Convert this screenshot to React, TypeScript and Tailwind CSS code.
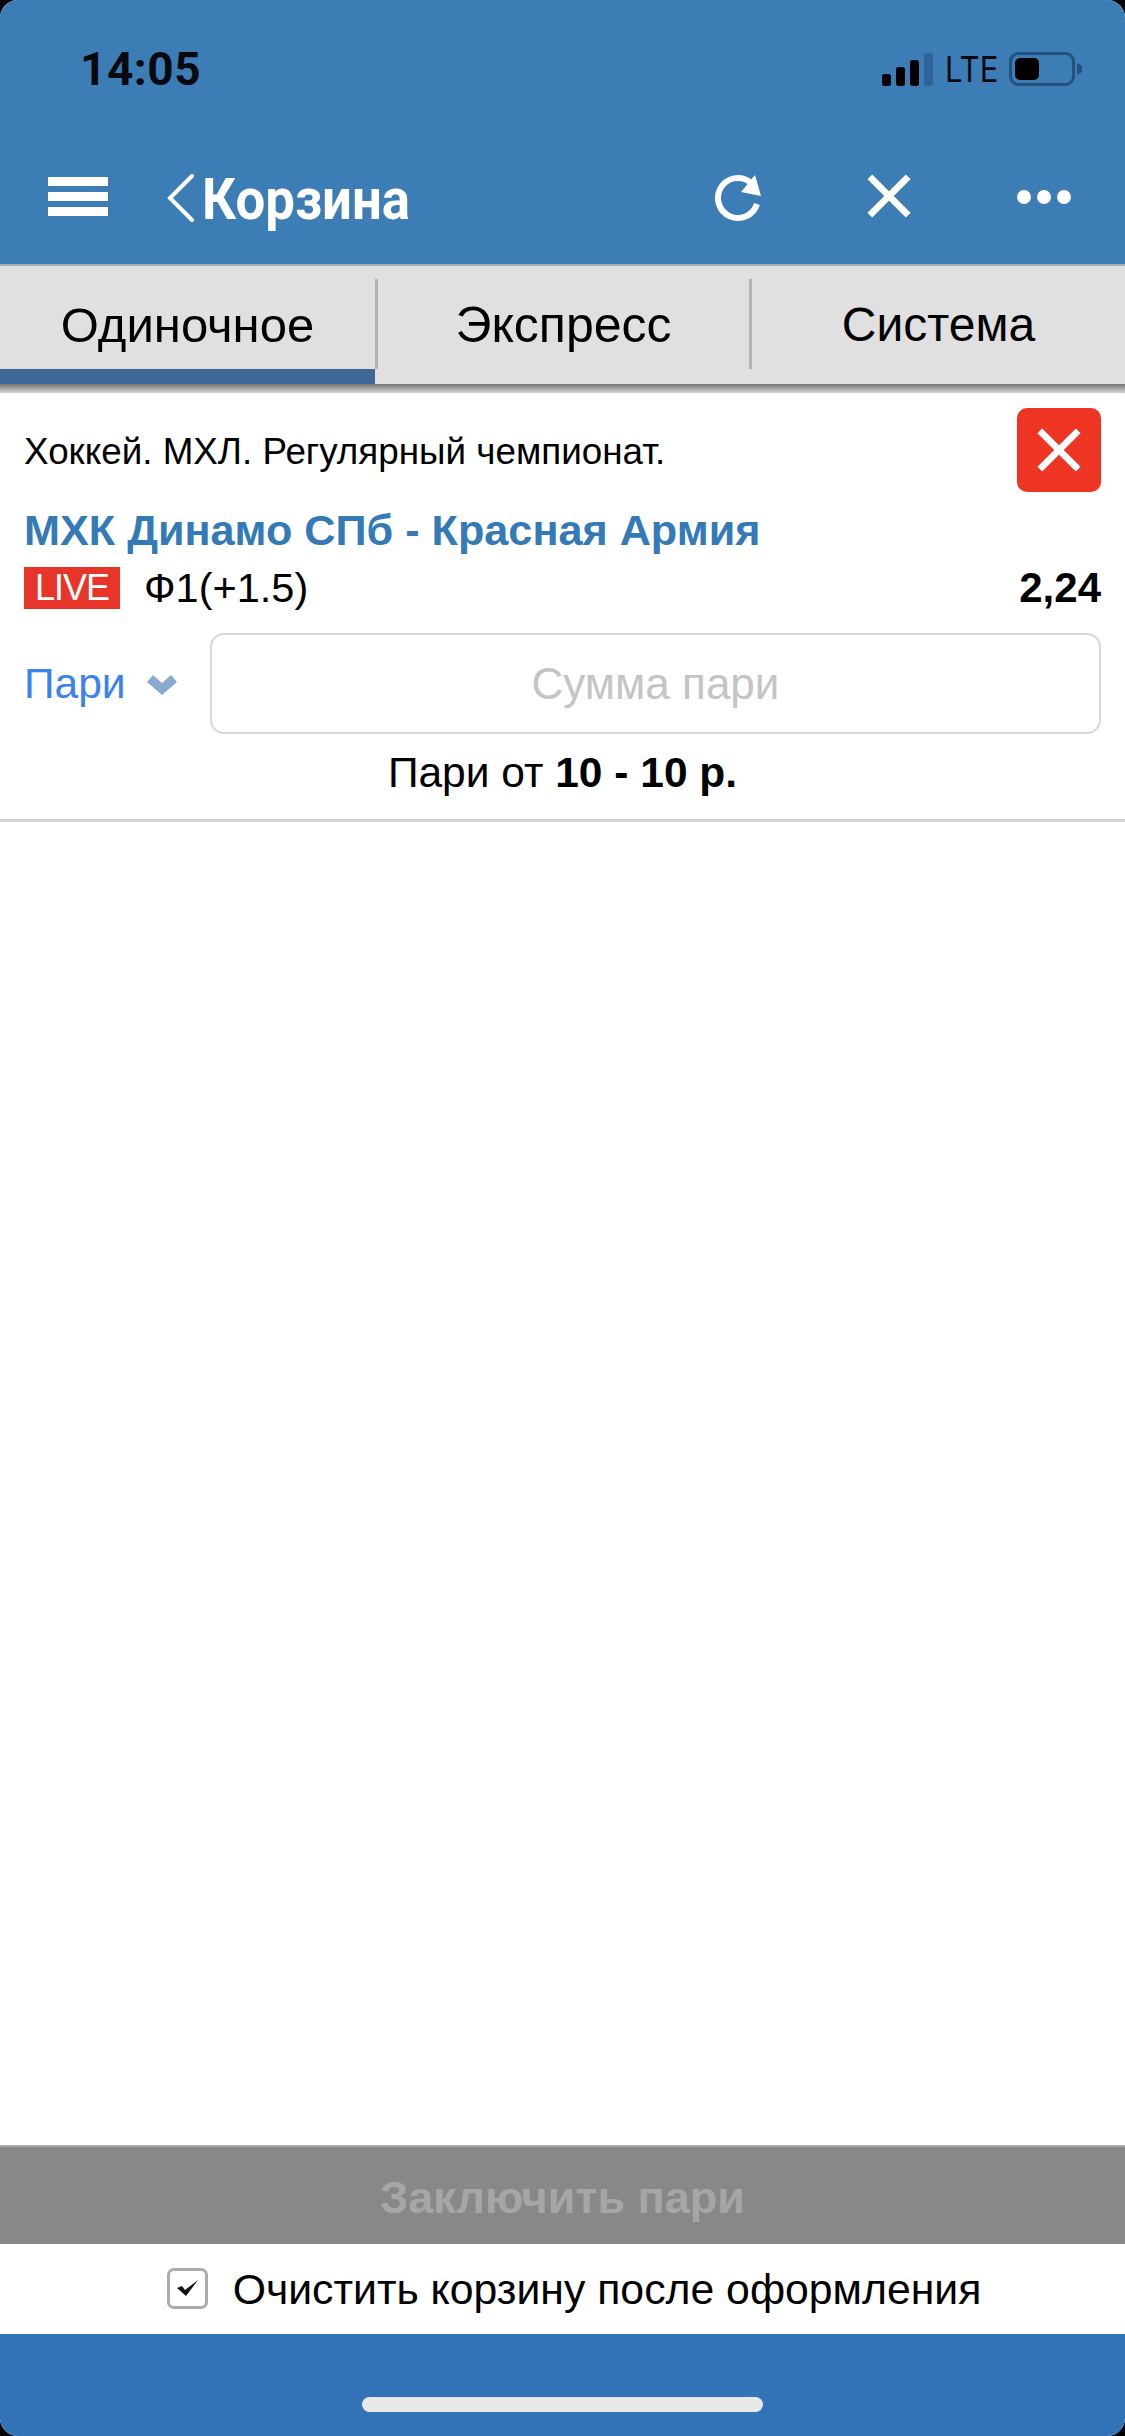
const sans = "font-['Liberation_Sans',Arial,sans-serif]";

function Refresh() {
  return (
    <svg width="48" height="48" viewBox="0 0 48 48" fill="none">
      <path d="M43 30A20 20 0 1 1 36 8" stroke="#fff" strokeWidth="6" />
      <path d="M41 1l6 21-20-4z" fill="#fff" />
    </svg>
  );
}

function Cross({ size, w }: { size: number; w: number }) {
  return (
    <svg width={size} height={size} viewBox="0 0 48 48" fill="none">
      <path d="M4 4l40 40M44 4L4 44" stroke="#fff" strokeWidth={w} />
    </svg>
  );
}

export default function App() {
  return (
    <div className="w-[1125px] h-[2436px] bg-black">
      <div className={`${sans} w-[1125px] h-[2436px] flex flex-col bg-white overflow-hidden rounded-[18px]`}>
        <header className="h-[264px] bg-[#3d7db6] shrink-0 flex flex-col">
          <div className="h-[132px] pl-[80px] pr-[43px] pt-[44px] flex justify-between items-start">
            <span className="text-[46px] leading-[50px] font-bold text-[#050a10] tracking-[0.5px] font-['Roboto',sans-serif]">14:05</span>
            <div className="flex items-center h-[34px] mt-[8px]">
              <svg width="51" height="33" viewBox="0 0 51 33">
                <rect x="0" y="21" width="9" height="12" rx="2.5" fill="#000" />
                <rect x="14" y="14" width="9" height="19" rx="2.5" fill="#000" />
                <rect x="28" y="7" width="9" height="26" rx="2.5" fill="#000" />
                <rect x="42" y="0" width="9" height="33" rx="2.5" fill="#2e6599" />
              </svg>
              <span className="w-[51px] ml-[12px] text-[35px] leading-[34px] text-[#050a10] font-['Inter',sans-serif] scale-x-[0.89] origin-left">LTE</span>
              <svg width="73" height="34" viewBox="0 0 73 34" className="ml-[13px]">
                <rect x="1.5" y="1.5" width="63" height="31" rx="8" fill="none" stroke="#23517d" strokeWidth="3" />
                <rect x="6" y="6" width="24" height="22" rx="5" fill="#000" />
                <path d="M68 11l5 3v6l-5 3z" fill="#23517d" />
              </svg>
            </div>
          </div>
          <div className="h-[132px] relative flex items-start pt-[42px] pl-[48px]">
            <div className="w-[60px] flex flex-col gap-[6px] pt-[3px]">
              <div className="h-[9px] bg-white" />
              <div className="h-[9px] bg-white" />
              <div className="h-[9px] bg-white" />
            </div>
            <svg width="30" height="48" viewBox="0 0 30 48" fill="none" className="ml-[58px]">
              <path d="M26 2L4 24l22 22" stroke="#fff" strokeWidth="4" strokeLinecap="round" />
            </svg>
            <span className="ml-[6px] mt-[-8px] text-[58px] leading-[66px] font-bold text-white scale-x-[0.91] origin-left font-['Roboto',sans-serif]">Корзина</span>
            <div className="absolute left-[714px] top-[42px]"><Refresh /></div>
            <div className="absolute left-[866px] top-[41px]"><Cross size={46} w={7} /></div>
            <div className="absolute left-[1017px] top-[58px] flex gap-[6px]">
              <div className="w-[14px] h-[14px] rounded-full bg-white" />
              <div className="w-[14px] h-[14px] rounded-full bg-white" />
              <div className="w-[14px] h-[14px] rounded-full bg-white" />
            </div>
          </div>
        </header>

        <nav className="h-[120px] shrink-0 bg-[#e0e0e0] border-t-[2px] border-[#a9b2ba] flex">
          <div className="w-[375px] relative flex justify-center pt-[30px]">
            <span className="text-[49px] leading-[58px] text-black">Одиночное</span>
            <div className="absolute left-0 right-0 bottom-0 h-[15px] bg-[#3f6899]" />
          </div>
          <div className="w-[3px] h-[90px] bg-[#b3b3b3] mt-[13px]" />
          <div className="flex-1 flex justify-center pt-[30px]">
            <span className="text-[50px] leading-[58px] text-black">Экспресс</span>
          </div>
          <div className="w-[3px] h-[90px] bg-[#b3b3b3] mt-[13px]" />
          <div className="w-[373px] flex justify-center pt-[30px]">
            <span className="text-[48px] leading-[58px] text-black">Система</span>
          </div>
        </nav>
        <div className="h-[9px] shrink-0 bg-gradient-to-b from-[#777] to-[#d4d4d4]" />

        <section className="h-[429px] shrink-0 border-b-[3px] border-[#d2d2d2] px-[24px] flex flex-col">
          <div className="flex justify-between items-center mt-[15px] h-[84px]">
            <span className="text-[36.8px] leading-[44px] text-black pt-[4px]">Хоккей. МХЛ. Регулярный чемпионат.</span>
            <div className="w-[84px] h-[84px] rounded-[10px] bg-[#ee3524] flex items-center justify-center">
              <Cross size={46} w={7} />
            </div>
          </div>
          <div className="mt-[13px] text-[43.2px] leading-[50px] font-bold text-[#337ab7]">МХК Динамо СПб - Красная Армия</div>
          <div className="mt-[12px] flex items-center justify-between h-[42px]">
            <div className="flex items-center">
              <span className="w-[96px] h-[42px] bg-[#e8352a] flex items-center justify-center text-[36px] leading-[42px] text-white tracking-[-1px]">LIVE</span>
              <span className="ml-[24px] text-[41.5px] leading-[48px] text-black">Ф1(+1.5)</span>
            </div>
            <span className="text-[42px] leading-[48px] font-bold text-black">2,24</span>
          </div>
          <div className="mt-[24px] flex items-center h-[101px]">
            <span className="text-[42.5px] leading-[50px] text-[#3b82f0] w-[123px]">Пари</span>
            <svg width="30" height="20" viewBox="0 0 30 20" className="mt-[3px]">
              <path d="M0 7l6-7 9 8 9-8 6 7-15 13z" fill="#8aa9d0" />
            </svg>
            <div className="ml-[33px] flex-1 h-[101px] rounded-[14px] border-[2px] border-[#d8d8d8] flex items-center justify-center text-[44px] text-[#c4c4c4]">Сумма пари</div>
          </div>
          <div className="mt-[14px] text-center text-[42.5px] leading-[50px] text-black">Пари от <b>10 - 10 р.</b></div>
        </section>

        <div className="flex-1" />

        <button className="h-[99px] shrink-0 bg-[#888888] border-t-[2px] border-[#a8a8a8] flex items-center justify-center pt-[4px] text-[45px] font-bold text-[#a6a6a6]">Заключить пари</button>
        <div className="h-[90px] shrink-0 flex items-center justify-center gap-[25px] pl-[23px]">
          <div className="w-[41px] h-[41px] rounded-[7px] border-[3px] border-[#ababab] flex items-center justify-center mt-[-2px]">
            <svg width="21" height="16" viewBox="0 0 21 16"><path d="M0 8l5-2 3 4L21 0 9 16z" fill="#111" /></svg>
          </div>
          <span className="text-[42.75px] leading-[50px] text-black">Очистить корзину после оформления</span>
        </div>
        <footer className="h-[102px] shrink-0 bg-[#3374b9] flex justify-center pt-[63px]">
          <div className="w-[401px] h-[15px] rounded-[8px] bg-[#e8e8e8]" />
        </footer>
      </div>
    </div>
  );
}
